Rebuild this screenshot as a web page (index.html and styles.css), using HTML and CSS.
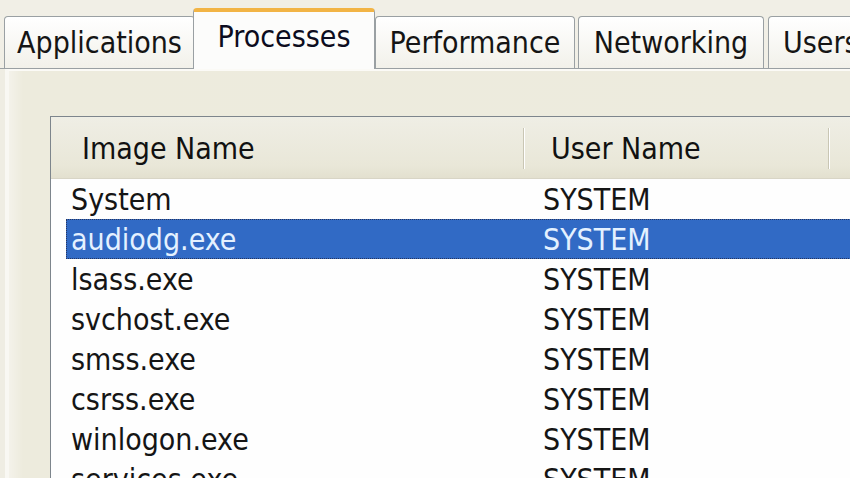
FILE: index.html
```html
<!DOCTYPE html>
<html>
<head>
<meta charset="utf-8">
<link rel="stylesheet" href="styles.css">
</head>
<body>
<div class="window">
  <div class="tabs">
    <div class="tab tab-apps">Applications</div>
    <div class="tab tab-active tab-proc">Processes</div>
    <div class="tab tab-perf">Performance</div>
    <div class="tab tab-net">Networking</div>
    <div class="tab tab-users">Users</div>
  </div>
  <div class="panel">
    <div class="list">
      <div class="header">
        <div class="hcol hcol-image">Image Name</div>
        <div class="hcol hcol-user">User Name</div>
        <div class="hcol hcol-rest"></div>
      </div>
      <div class="rows">
        <div class="row"><span class="cell-image">System</span><span class="cell-user">SYSTEM</span></div>
        <div class="row row-selected"><span class="cell-image">audiodg.exe</span><span class="cell-user">SYSTEM</span></div>
        <div class="row"><span class="cell-image">lsass.exe</span><span class="cell-user">SYSTEM</span></div>
        <div class="row"><span class="cell-image">svchost.exe</span><span class="cell-user">SYSTEM</span></div>
        <div class="row"><span class="cell-image">smss.exe</span><span class="cell-user">SYSTEM</span></div>
        <div class="row"><span class="cell-image">csrss.exe</span><span class="cell-user">SYSTEM</span></div>
        <div class="row"><span class="cell-image">winlogon.exe</span><span class="cell-user">SYSTEM</span></div>
        <div class="row"><span class="cell-image">services.exe</span><span class="cell-user">SYSTEM</span></div>
      </div>
    </div>
  </div>
</div>
</body>
</html>
```

FILE: styles.css
```css
html, body {
  margin: 0;
  padding: 0;
  width: 850px;
  height: 478px;
  overflow: hidden;
  background: #efede3;
  font-family: "DejaVu Sans Condensed", "DejaVu Sans", sans-serif;
  font-stretch: condensed;
  color: #111;
}

.window {
  width: 850px;
  height: 478px;
  display: flex;
  flex-direction: column;
}

.tabs {
  height: 68px;
  flex: none;
  display: flex;
  align-items: flex-end;
  padding-left: 4px;
  border-bottom: 1px solid #9aa0a3;
  background: #f1efe6;
}

.tab {
  flex: none;
  box-sizing: border-box;
  height: 52px;
  margin-right: 2px;
  border: 1px solid #9aa0a3;
  border-bottom: none;
  border-radius: 4px 4px 0 0;
  background: linear-gradient(#ffffff, #f2f1ea);
  display: flex;
  align-items: center;
  justify-content: center;
  font-size: 30px;
  white-space: nowrap;
  overflow: hidden;
  color: #151515;
}

.tab-apps { width: 191px; }
.tab-perf { width: 200px; margin-left: -2px; }
.tab-net { width: 186px; margin-left: 1px; margin-right: 4px; }
.tab-users { width: 120px; justify-content: flex-start; padding-left: 14px; }

.tab-active {
  height: 61px;
  margin-bottom: -1px;
  margin-left: -4px;
  margin-right: 2px;
  width: 182px;
  background: #fcfcfb;
  border-top: 4px solid #f2b445;
  border-left-color: #9aa0a3;
  align-items: flex-start;
  padding-top: 7px;
  position: relative;
  z-index: 1;
  color: #0c0c20;
}

.panel {
  flex: 1;
  margin-left: 5px;
  border-top: 2px solid #fbfaf6;
  border-left: 4px solid #f9f8f3;
  background: linear-gradient(to right, #f4f2ea 0, #edebdd 14px, #edebde 100%);
  padding-top: 45px;
  padding-left: 41px;
  overflow: hidden;
}

.list {
  width: 900px;
  height: 400px;
  border: 1px solid #7d858c;
  border-right: none;
  border-bottom: none;
  background: #fefefe;
}

.header {
  height: 61px;
  display: flex;
  background: linear-gradient(#efeee5, #e9e7d8 80%, #e3e0cf);
  border-bottom: 1px solid #d8d5c6;
  font-size: 30px;
  color: #111;
}

.hcol {
  position: relative;
  box-sizing: border-box;
  display: flex;
  align-items: center;
  padding-top: 2px;
}

.hcol-image { width: 473px; padding-left: 31px; }
.hcol-user { width: 305px; padding-left: 27px; }
.hcol-rest { flex: 1; }

.hcol-image::after,
.hcol-user::after {
  content: "";
  position: absolute;
  right: 0;
  top: 11px;
  bottom: 9px;
  width: 1px;
  background: #c9c6b4;
  box-shadow: 1px 0 0 #ffffff;
}

.row {
  box-sizing: border-box;
  height: 40px;
  margin-left: 15px;
  display: grid;
  grid-template-columns: 457px 1fr;
  align-items: center;
  font-size: 30px;
  color: #151515;
  border: 1px solid transparent;
}

.cell-image { padding-left: 4px; }
.cell-user { padding-left: 19px; }

.row-selected {
  background: #316ac5;
  color: #e4f1ff;
  border: 1px dotted #26345e;
}
```
